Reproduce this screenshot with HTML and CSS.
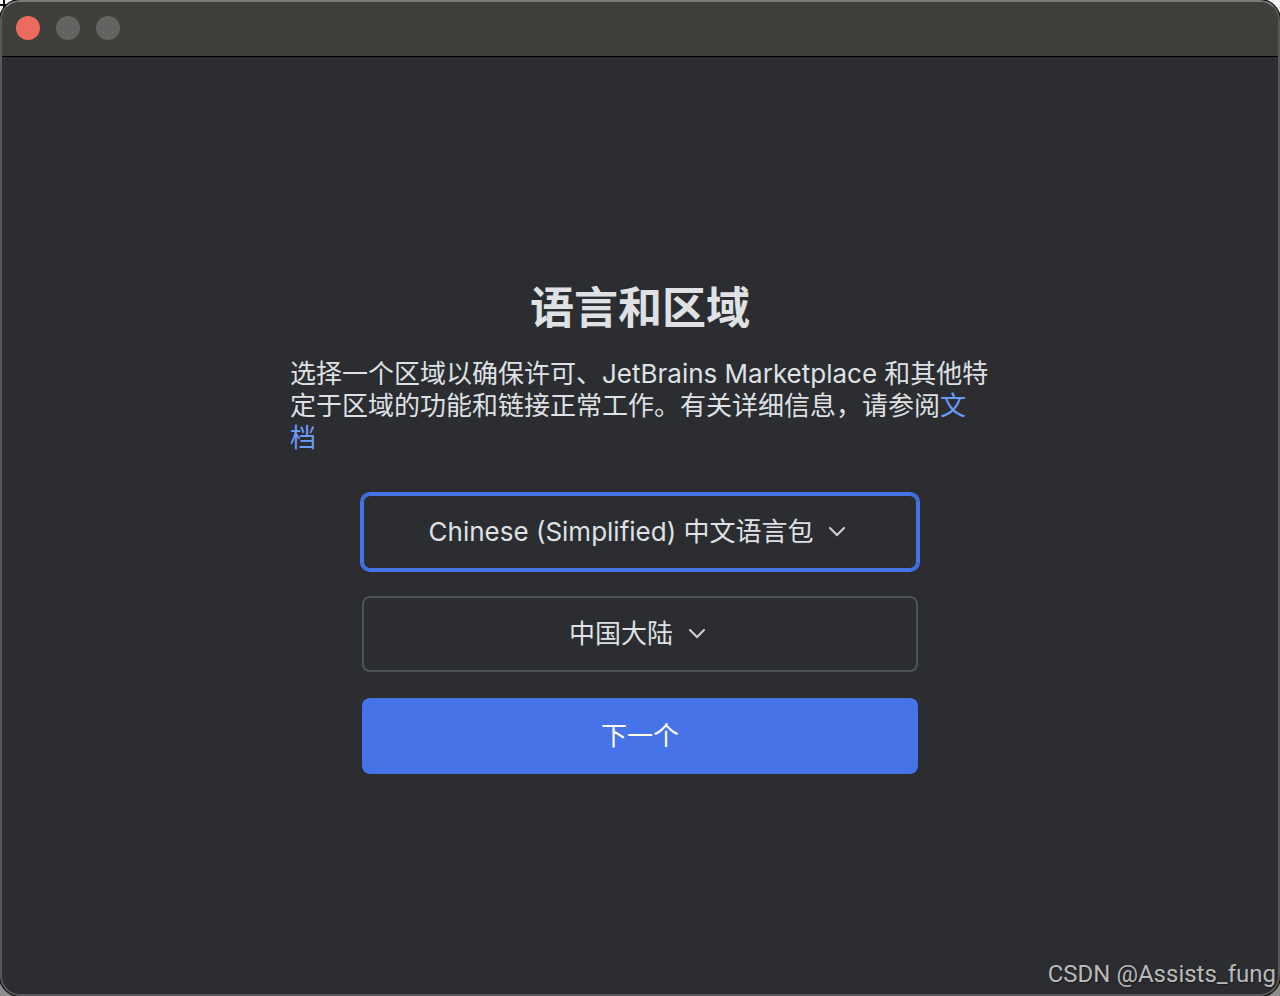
FILE: index.html
```html
<!DOCTYPE html>
<html lang="zh-CN">
<head>
<meta charset="utf-8">
<meta name="viewport" content="width=device-width, initial-scale=1">
<title>语言和区域</title>
<link rel="stylesheet" href="styles.css">
</head>
<body class="desktop">
<div class="window">
  <header class="titlebar">
    <button class="light light-close" type="button" aria-label="关闭"></button>
    <button class="light" type="button" aria-label="最小化" disabled></button>
    <button class="light" type="button" aria-label="缩放" disabled></button>
  </header>
  <main class="content">
    <h1 class="title">语言和区域</h1>
    <p class="intro">选择一个区域以确保许可、JetBrains Marketplace 和其他特定于区域的功能和链接正常工作。有关详细信息，请参阅<a class="link" href="#docs">文档</a></p>
    <form class="form">
      <label class="field field-active">
        <select class="select" aria-label="语言">
          <option>Chinese (Simplified) 中文语言包</option>
        </select>
        <svg class="chevron" viewBox="0 0 16 10" aria-hidden="true"><path d="M1 1l7 7 7-7"/></svg>
      </label>
      <label class="field">
        <select class="select" aria-label="区域">
          <option>中国大陆</option>
        </select>
        <svg class="chevron" viewBox="0 0 16 10" aria-hidden="true"><path d="M1 1l7 7 7-7"/></svg>
      </label>
      <button class="next" type="button">下一个</button>
    </form>
  </main>
  <span class="watermark">CSDN @Assists_fung</span>
</div>
</body>
</html>
```

FILE: styles.css
```css
* {
  box-sizing: border-box;
}

.desktop {
  margin: 0;
  background:
    linear-gradient(#111, #111) 3px 0 / 2px 12px no-repeat,
    linear-gradient(#111, #111) 0 4px / 12px 2px no-repeat,
    linear-gradient(#f4f4f4, #8c8c8c);
  font-family: Inter, "Noto Sans CJK SC", sans-serif;
  font-size: 26px;
  line-height: 32px;
  color: #dfe1e5;
}

.window {
  position: relative;
  display: flex;
  flex-direction: column;
  min-height: 100vh;
  overflow: hidden;
  background: #2b2d30;
  border: 2px solid #58595b;
  border-top-color: #7b7b79;
  border-radius: 20px;
  box-shadow: 0 0 0 1px #000;
}

.titlebar {
  display: flex;
  align-items: center;
  gap: 16px;
  height: 55px;
  padding: 0 14px 2px;
  background: #3f3f3c;
  border-bottom: 1px solid #000;
}

.light {
  width: 24px;
  height: 24px;
  padding: 0;
  border: 0;
  border-radius: 50%;
  background: #636361;
}

.light-close {
  background: #ed6a5e;
}

.content {
  flex: 1;
  display: flex;
  flex-direction: column;
  align-items: center;
  justify-content: center;
}

.title {
  margin: 0 0 20px;
  font-size: 44px;
  line-height: 60px;
  font-weight: 700;
}

.intro {
  width: 100%;
  max-width: 700px;
  margin: 0 0 40px;
}

.link {
  color: #6b9bfa;
  text-decoration: none;
}

.form {
  display: flex;
  flex-direction: column;
  gap: 26px;
  width: 100%;
  max-width: 556px;
}

.field {
  display: flex;
  align-items: center;
  justify-content: center;
  gap: 16px;
  height: 76px;
  padding-right: 6px;
  border: 2px solid #4e5157;
  border-radius: 8px;
}

.field-active {
  border-color: #4674e8;
  box-shadow: 0 0 0 2px #4674e8;
}

.select {
  appearance: none;
  field-sizing: content;
  padding: 0;
  border: 0;
  outline: 0;
  background: transparent;
  color: inherit;
  font: inherit;
}

.chevron {
  width: 16px;
  height: 10px;
  fill: none;
  stroke: #ced0d6;
  stroke-width: 2;
  stroke-linecap: square;
}

.next {
  height: 76px;
  border: 0;
  border-radius: 8px;
  background: #4674e8;
  color: #fff;
  font: inherit;
}

.watermark {
  position: absolute;
  right: 2px;
  bottom: 4px;
  font-family: Roboto, "Liberation Sans", sans-serif;
  font-size: 24px;
  color: #b9babb;
  text-shadow: 1px 1px 1px #1a1a1a;
}
```
